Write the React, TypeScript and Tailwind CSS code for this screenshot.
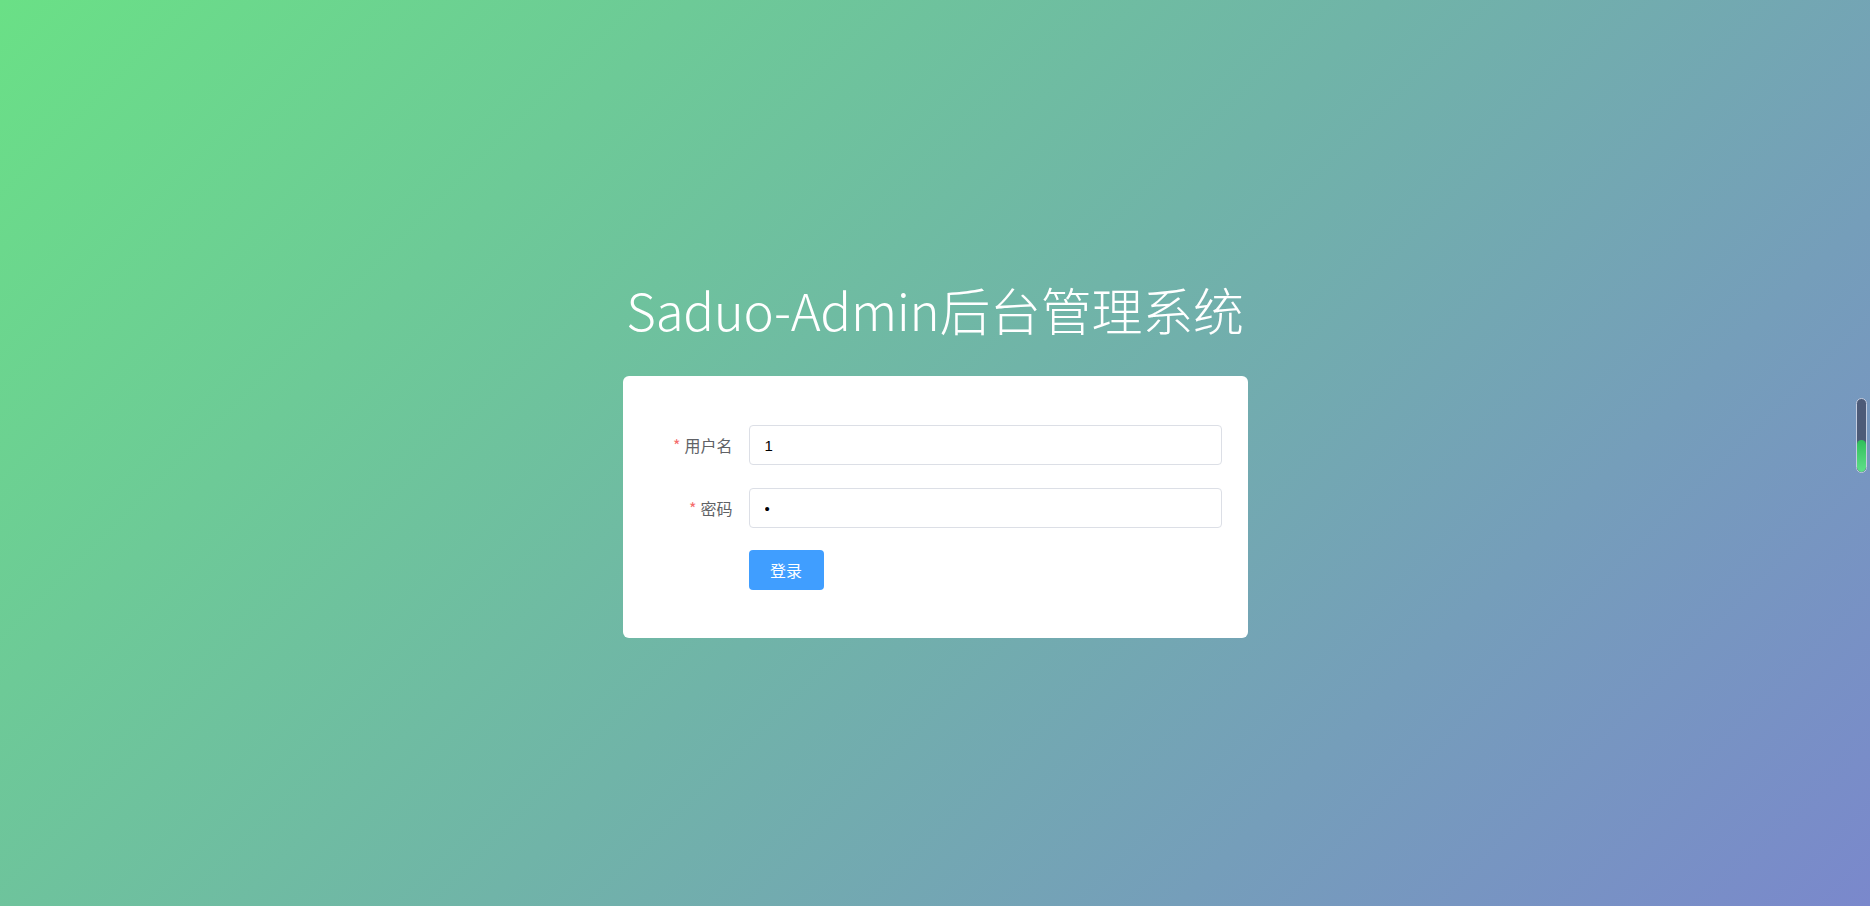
import React, { useState } from 'react';

const FormRow: React.FC<{ label: string; children: React.ReactNode }> = ({ label, children }) => (
  <div className="flex items-center h-[40px]">
    <label className="w-[100px] pr-[16px] text-right text-[16px] text-[#606266] shrink-0">
      <span className="text-[#F56C6C] mr-[4px]">*</span>
      {label}
    </label>
    <div className="flex-1">{children}</div>
  </div>
);

const App: React.FC = () => {
  const [username, setUsername] = useState('1');
  const [password, setPassword] = useState('1');

  return (
    <div
      className="relative w-full h-[906px] overflow-hidden flex flex-col items-center pt-[279px] bg-[linear-gradient(135deg,#6ae086_0%,#70b4a8_50%,#7a88cc_100%)]"
      style={{ fontFamily: '"Noto Sans CJK SC", "Noto Sans", sans-serif' }}
    >
      <h1 className="text-[51px] leading-[60px] font-light text-white tracking-[-0.3px]">
        Saduo-Admin后台管理系统
      </h1>

      <div className="mt-[37px] w-[625px] bg-white rounded-[6px] px-[26px] pt-[49px] pb-[48px] flex flex-col">
        <FormRow label="用户名">
          <input
            value={username}
            onChange={e => setUsername(e.target.value)}
            className="w-full h-[40px] px-[15px] rounded-[4px] border border-[#DCDFE6] text-[15px] text-black outline-none"
            style={{ fontFamily: '"Liberation Sans", Arial, sans-serif' }}
          />
        </FormRow>
        <div className="mt-[23px]">
          <FormRow label="密码">
            <input
              type="password"
              value={password}
              onChange={e => setPassword(e.target.value)}
              className="w-full h-[40px] px-[15px] rounded-[4px] border border-[#DCDFE6] text-[15px] text-black outline-none"
              style={{ fontFamily: '"Liberation Sans", Arial, sans-serif' }}
            />
          </FormRow>
        </div>
        <div className="mt-[22px] pl-[100px]">
          <button className="h-[40px] w-[75px] rounded-[4px] bg-[#409EFF] text-white text-[16px]">
            登录
          </button>
        </div>
      </div>

      {/* little side widget */}
      <div className="absolute left-[1856px] top-[398px] w-[11px] h-[75px] rounded-full border border-[#c4cde0] bg-[#4d5b78] overflow-hidden flex flex-col justify-end">
        <div className="h-[32px] rounded-full bg-gradient-to-b from-[#2fbf5a] to-[#5fe08a]" />
      </div>
    </div>
  );
};

export default App;
